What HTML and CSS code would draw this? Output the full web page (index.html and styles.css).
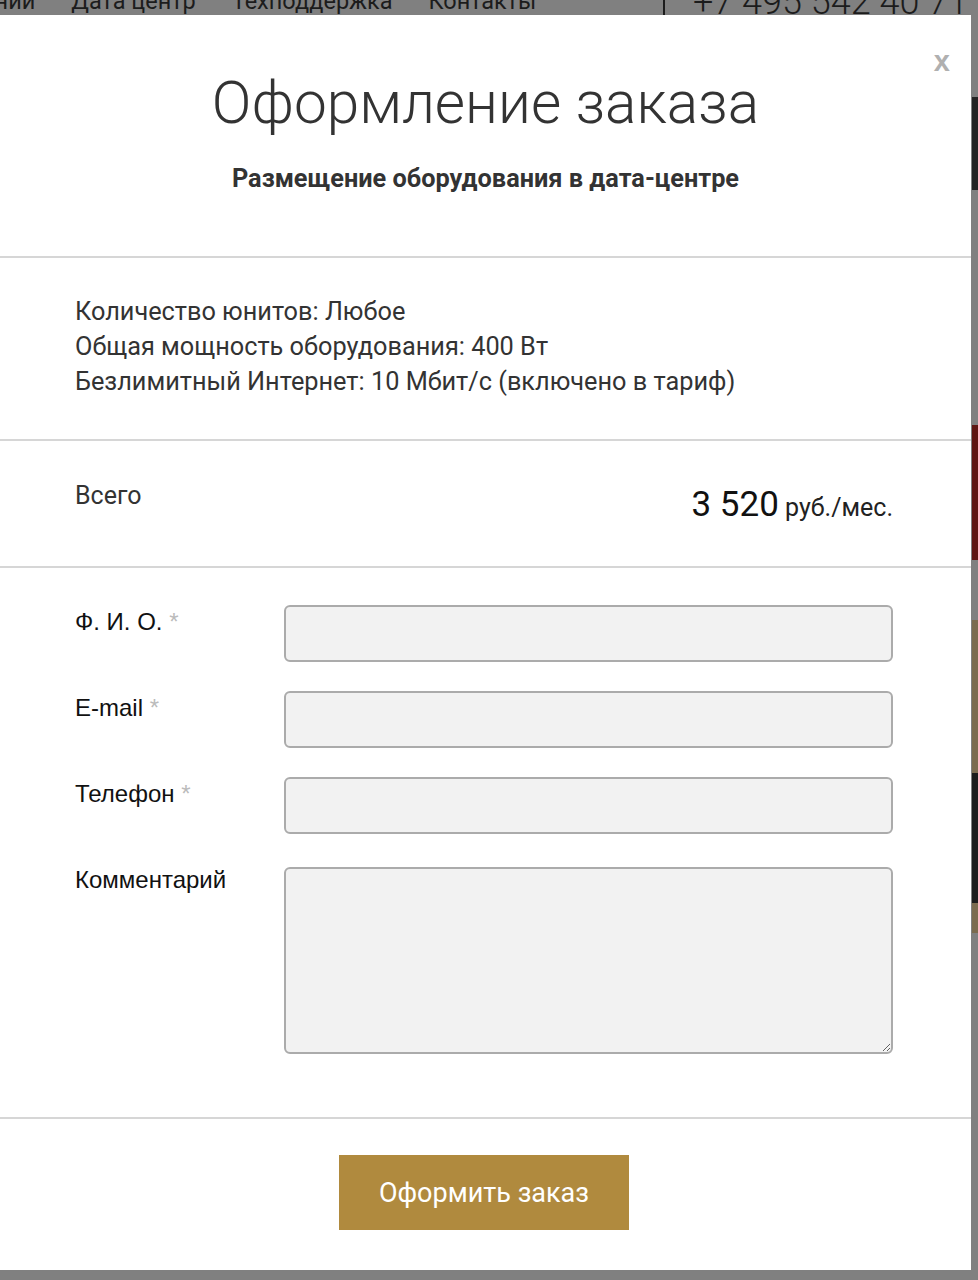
FILE: index.html
```html
<!DOCTYPE html>
<html lang="ru">
<head>
    <meta charset="UTF-8">
    <meta name="viewport" content="width=device-width, initial-scale=1.0">
    <title>Оформление заказа</title>
    <link rel="stylesheet" href="styles.css">
</head>
<body>
    <div class="page">
        <div class="site-header">
            <nav class="site-nav">
                <span class="nav-item nav-first">Решений</span>
                <span class="nav-item">Дата центр</span>
                <span class="nav-item">Техподдержка</span>
                <span class="nav-item">Контакты</span>
            </nav>
            <div class="site-phone">+7 495 542 40 71</div>
        </div>
        <div class="side-strip">
            <div class="strip strip-gap1"></div>
            <div class="strip strip-dark"></div>
            <div class="strip strip-gap2"></div>
            <div class="strip strip-red"></div>
            <div class="strip strip-gap3"></div>
            <div class="strip strip-tan"></div>
            <div class="strip strip-black"></div>
            <div class="strip strip-tan2"></div>
        </div>
    </div>

    <div class="modal">
        <span class="modal-close">x</span>

        <div class="modal-head">
            <h1 class="modal-title">Оформление заказа</h1>
            <p class="modal-subtitle">Размещение оборудования в дата-центре</p>
        </div>

        <div class="modal-section order-info">
            <p>Количество юнитов: Любое</p>
            <p>Общая мощность оборудования: 400 Вт</p>
            <p>Безлимитный Интернет: 10 Мбит/с (включено в тариф)</p>
        </div>

        <div class="modal-section order-total">
            <span class="total-label">Всего</span>
            <span class="total-price"><span class="total-sum">3 520</span> руб./мес.</span>
        </div>

        <form class="modal-section order-form">
            <div class="form-row">
                <label for="fio">Ф. И. О. <span class="req">*</span></label>
                <input type="text" id="fio">
            </div>
            <div class="form-row">
                <label for="email">E-mail <span class="req">*</span></label>
                <input type="email" id="email">
            </div>
            <div class="form-row">
                <label for="phone">Телефон <span class="req">*</span></label>
                <input type="tel" id="phone">
            </div>
            <div class="form-row form-row-comment">
                <label for="comment">Комментарий</label>
                <textarea id="comment"></textarea>
            </div>
        </form>

        <div class="modal-footer">
            <button type="button" class="submit-btn">Оформить заказ</button>
        </div>
    </div>
</body>
</html>
```

FILE: styles.css
```css
html, body {
    margin: 0;
    padding: 0;
}
body {
    background-color: #808080;
    font-family: Roboto, "Liberation Sans", sans-serif;
    height: 1280px;
    overflow: hidden;
}
.page {
    position: relative;
    height: 1280px;
}
.site-header {
    display: flex;
    align-items: flex-start;
    height: 15px;
    overflow: hidden;
}
.site-nav {
    display: flex;
    gap: 36px;
    margin-left: -64px;
    margin-top: -10px;
    font-family: Roboto, sans-serif;
    font-size: 23.5px;
    line-height: 22px;
    color: #1c1c1c;
}
.site-phone {
    margin-left: auto;
    box-sizing: border-box;
    width: 315px;
    height: 40px;
    margin-top: -16px;
    padding-left: 28px;
    border-left: 2px solid #1c1c1c;
    font-size: 36px;
    line-height: 36px;
    color: #1c1c1c;
    font-weight: 300;
    white-space: nowrap;
}
.side-strip {
    position: absolute;
    top: 0;
    right: 0;
    width: 6px;
    display: flex;
    flex-direction: column;
}
.strip-gap1 { height: 97px; }
.strip-dark { height: 93px; background-color: #232323; }
.strip-gap2 { height: 235px; }
.strip-red { height: 135px; background-color: #5e1512; }
.strip-gap3 { height: 60px; }
.strip-tan { height: 153px; background-color: #7b6b4f; }
.strip-black { height: 130px; background-color: #1c1c1c; }
.strip-tan2 { height: 30px; background-color: #7b6b4f; }

.modal {
    position: absolute;
    top: 15px;
    left: 0;
    width: 971px;
    height: 1255px;
    background-color: #fff;
    color: #333;
}
.modal-close {
    position: absolute;
    top: 31px;
    right: 21px;
    font-family: "Liberation Sans", Arial, sans-serif;
    font-size: 29px;
    line-height: 30px;
    font-weight: bold;
    color: #b0b0b0;
    cursor: pointer;
}
.modal-head {
    padding: 55px 20px 62px;
    text-align: center;
    border-bottom: 2px solid #d6d6d6;
}
.modal-title {
    margin: 0;
    font-size: 58.5px;
    line-height: 66px;
    font-weight: 300;
    color: #333;
}
.modal-subtitle {
    margin: 28px 0 0;
    font-size: 25.3px;
    line-height: 30px;
    font-weight: bold;
    color: #333;
}
.modal-section {
    padding-left: 75px;
    padding-right: 78px;
    border-bottom: 2px solid #d6d6d6;
}
.order-info {
    padding-top: 36px;
    padding-bottom: 40px;
}
.order-info p {
    margin: 0;
    font-size: 25.3px;
    line-height: 35px;
}
.order-total {
    display: flex;
    justify-content: space-between;
    align-items: flex-start;
    padding-top: 38px;
    padding-bottom: 36px;
    font-size: 25px;
    line-height: 33px;
}
.total-price {
    margin-top: 4px;
    line-height: 44px;
    color: #222;
}
.total-sum {
    font-size: 35px;
    color: #111;
}
.order-form {
    padding-top: 37px;
    padding-bottom: 63px;
    display: flex;
    flex-direction: column;
    gap: 29px;
}
.form-row {
    display: flex;
    align-items: flex-start;
}
.form-row-comment {
    margin-top: 4px;
}
.form-row label {
    width: 209px;
    padding-top: 3px;
    font-family: "Liberation Sans", Arial, sans-serif;
    font-size: 24px;
    line-height: 28px;
    color: #111;
}
.form-row-comment label {
    padding-top: 0;
    margin-top: -1px;
}
.req {
    color: #bbb;
}
.form-row input,
.form-row textarea {
    flex: 1;
    box-sizing: border-box;
    height: 57px;
    margin: 0;
    background-color: #f2f2f2;
    border: 2px solid #ababab;
    border-radius: 6px;
    font-size: 20px;
    padding: 0 12px;
}
.form-row textarea {
    height: 187px;
    resize: vertical;
}
.modal-footer {
    padding-top: 36px;
    padding-right: 3px;
    text-align: center;
}
.submit-btn {
    width: 290px;
    height: 75px;
    background-color: #b08a3e;
    color: #fff;
    border: none;
    font-family: Roboto, sans-serif;
    font-size: 27px;
    cursor: pointer;
}
```
